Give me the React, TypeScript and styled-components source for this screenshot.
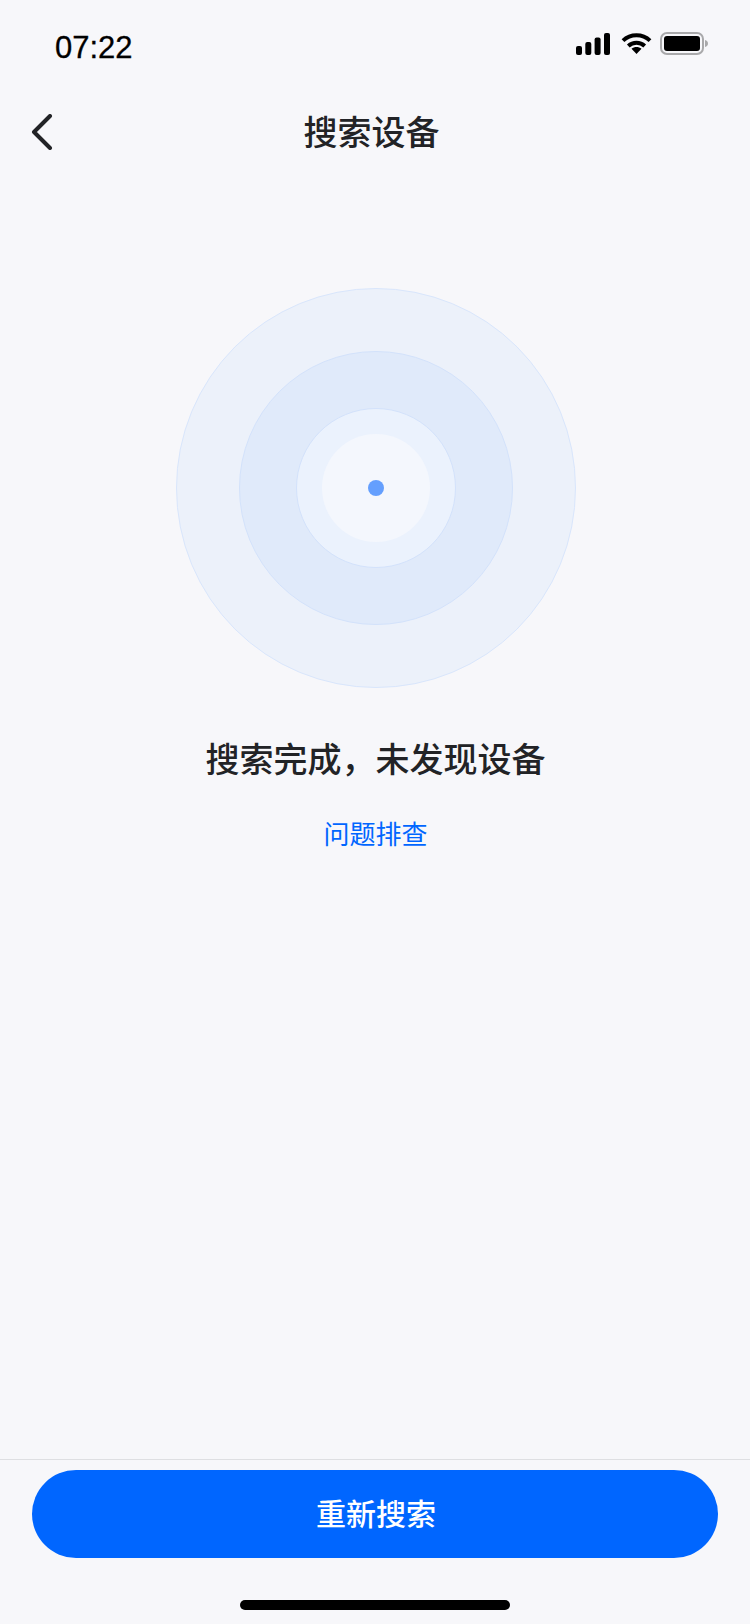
import React from 'react';
import styled, { createGlobalStyle } from 'styled-components';

const GlobalStyle = createGlobalStyle`
  html, body {
    margin: 0;
    padding: 0;
    background: #f7f7fa;
  }
  * {
    box-sizing: border-box;
  }
`;

const cjk = `"Noto Sans CJK SC", "Noto Sans", sans-serif`;

const Page = styled.div`
  width: 750px;
  height: 1624px;
  display: flex;
  flex-direction: column;
  background: #f7f7fa;
  font-family: ${cjk};
  overflow: hidden;
`;

const StatusBar = styled.div`
  height: 84px;
  padding: 31px 42px 0 55px;
  display: flex;
  justify-content: space-between;
  align-items: flex-start;
`;

const Time = styled.span`
  font-family: "Liberation Sans", Arial, sans-serif;
  font-size: 31px;
  line-height: 34px;
  font-weight: 400;
  -webkit-text-stroke: 0.3px #000;
  color: #000;
`;

const StatusIcons = styled.div`
  display: flex;
  align-items: center;
  gap: 8px;
  margin-top: 1px;

  svg:first-child {
    margin-right: 3px;
  }
`;

const Nav = styled.header`
  height: 96px;
  padding: 0 38px 0 31px;
  display: grid;
  grid-template-columns: 1fr auto 1fr;
  align-items: center;
`;

const BackButton = styled.button`
  width: 22px;
  height: 36px;
  padding: 0;
  border: 0;
  background: none;
  display: block;
`;

const Title = styled.h1`
  margin: 0 0 2px;
  font-size: 34px;
  line-height: 48px;
  font-weight: 500;
  color: #222326;
`;

const Main = styled.main`
  flex: 1;
  display: flex;
  flex-direction: column;
  align-items: center;
  padding: 108px 0 0 1px;
`;

const Ring = styled.div<{ $size: number; $bg: string; $line?: string }>`
  width: ${(p) => p.$size}px;
  height: ${(p) => p.$size}px;
  flex: none;
  border-radius: 50%;
  background: ${(p) => p.$bg};
  border: ${(p) => (p.$line ? `1px solid ${p.$line}` : '0')};
  display: flex;
  align-items: center;
  justify-content: center;
`;

const Heading = styled.h2`
  margin: 45px 0 0;
  font-size: 34px;
  line-height: 50px;
  font-weight: 500;
  color: #222326;
`;

const HelpLink = styled.a`
  margin-top: 32px;
  font-size: 26px;
  line-height: 36px;
  color: #0066ff;
`;

const Footer = styled.footer`
  height: 165px;
  padding: 10px 32px 14px;
  border-top: 1px solid #dedfe2;
  display: flex;
  flex-direction: column;
  align-items: center;
`;

const PrimaryButton = styled.button`
  width: 686px;
  height: 88px;
  flex: none;
  padding: 0 0 4px 2px;
  border: 0;
  border-radius: 44px;
  background: #0066ff;
  color: #fff;
  font-family: ${cjk};
  font-size: 30px;
  font-weight: 500;
`;

const HomeBar = styled.div`
  width: 270px;
  height: 10px;
  margin-top: auto;
  border-radius: 5px;
  background: #000;
`;

const SignalIcon = () => (
  <svg width="34" height="22" viewBox="0 0 34 22" fill="#000">
    <rect x="0" y="13" width="6" height="9" rx="2" />
    <rect x="9.300" y="9" width="6" height="13" rx="2" />
    <rect x="18.600" y="4.500" width="6" height="17.500" rx="2" />
    <rect x="28" y="0" width="6" height="22" rx="2" />
  </svg>
);

const WifiIcon = () => (
  <svg width="31" height="21" viewBox="0 0 30 21" fill="none" stroke="#000" strokeWidth="4">
    <path d="M1.500 7.600C9 .4 21 .4 28.500 7.600" />
    <path d="M6.800 13C11.400 8.800 18.600 8.800 23.200 13" />
    <path d="M15 21l-5-5.200c2.900-2.400 7.100-2.400 10 0z" fill="#000" stroke="none" />
  </svg>
);

const BatteryIcon = () => (
  <svg width="48" height="23" viewBox="0 0 48 23">
    <rect x="1" y="1" width="42" height="21" rx="6" fill="none" stroke="#a9a9ab" strokeWidth="2" />
    <rect x="4" y="4" width="36" height="15" rx="3" fill="#000" />
    <path d="M45 8c1.800.5 3 1.900 3 3.500s-1.200 3-3 3.500z" fill="#a9a9ab" />
  </svg>
);

const BackIcon = () => (
  <svg width="22" height="36" viewBox="0 0 22 36" fill="none">
    <path
      d="M19 2 3 18l16 16"
      stroke="#222326"
      strokeWidth="4"
      strokeLinecap="round"
      strokeLinejoin="round"
    />
  </svg>
);

export default function App() {
  return (
    <Page>
      <GlobalStyle />
      <StatusBar>
        <Time>07:22</Time>
        <StatusIcons>
          <SignalIcon />
          <WifiIcon />
          <BatteryIcon />
        </StatusIcons>
      </StatusBar>
      <Nav>
        <BackButton aria-label="返回">
          <BackIcon />
        </BackButton>
        <Title>搜索设备</Title>
      </Nav>
      <Main>
        <Ring $size={400} $bg="#ecf1fa" $line="#d9e6fc">
          <Ring $size={274} $bg="#e0eafa" $line="#d3e2fb">
            <Ring $size={160} $bg="#ebf2fd" $line="#d3e2fb">
              <Ring $size={108} $bg="#f4f7fd">
                <Ring $size={16} $bg="#649ffe" />
              </Ring>
            </Ring>
          </Ring>
        </Ring>
        <Heading>搜索完成，未发现设备</Heading>
        <HelpLink>问题排查</HelpLink>
      </Main>
      <Footer>
        <PrimaryButton>重新搜索</PrimaryButton>
        <HomeBar />
      </Footer>
    </Page>
  );
}
